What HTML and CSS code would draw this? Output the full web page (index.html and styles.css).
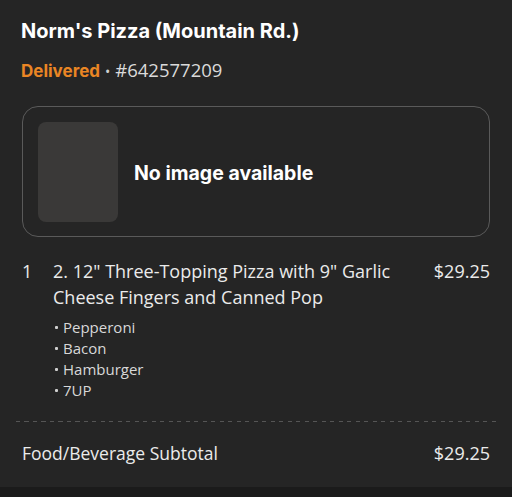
FILE: index.html
```html
<!DOCTYPE html>
<html>
<head>
<meta charset="utf-8">
<link rel="stylesheet" href="styles.css">
</head>
<body>
<div class="page">
  <header class="head">
    <h1 class="title">Norm's Pizza (Mountain Rd.)</h1>
    <div class="status"><span class="delivered">Delivered</span><span class="sep">•</span><span class="order">#642577209</span></div>
  </header>
  <div class="card">
    <div class="thumb"></div>
    <div class="noimg">No image available</div>
  </div>
  <div class="item">
    <div class="qty">1</div>
    <div class="info">
      <div class="name">2. 12" Three-Topping Pizza with 9" Garlic Cheese Fingers and Canned Pop</div>
      <ul class="opts">
        <li>Pepperoni</li>
        <li>Bacon</li>
        <li>Hamburger</li>
        <li>7UP</li>
      </ul>
    </div>
    <div class="price">$29.25</div>
  </div>
  <div class="dash"></div>
  <div class="total">
    <span>Food/Beverage Subtotal</span>
    <span class="total-price">$29.25</span>
  </div>
</div>
<div class="bottom"></div>
</body>
</html>
```

FILE: styles.css
```css
html, body {
  margin: 0;
  padding: 0;
  background: #252525;
}
body {
  font-family: "Open Sans", "Noto Sans", sans-serif;
  color: #ebebeb;
  width: 512px;
  height: 497px;
  overflow: hidden;
  display: flex;
  flex-direction: column;
}
.page {
  height: 487px;
  padding: 0 22px;
  box-sizing: border-box;
}
.head {
  padding-top: 17px;
}
.title {
  margin: 0 0 0 -1px;
  font-family: "Inter", sans-serif;
  font-weight: 700;
  font-size: 20px;
  line-height: 28px;
  color: #ffffff;
}
.status {
  margin-top: 14px;
  height: 22px;
  display: flex;
  align-items: baseline;
  line-height: 22px;
  margin-left: -1px;
}
.delivered {
  font-family: "Inter", sans-serif;
  font-weight: 700;
  font-size: 17px;
  color: #ea8624;
}
.sep {
  color: #d0d0d0;
  font-size: 14px;
  margin: 0 5px 0 5px;
}
.order {
  font-size: 18.5px;
  color: #dadada;
}
.card {
  margin-top: 25px;
  height: 131px;
  border: 1px solid #5a5a5a;
  border-radius: 16px;
  box-sizing: border-box;
  display: flex;
  align-items: center;
  padding-left: 15px;
  gap: 16px;
}
.thumb {
  width: 80px;
  height: 100px;
  border-radius: 8px;
  background: #3a3938;
}
.noimg {
  font-family: "Inter", sans-serif;
  font-weight: 700;
  font-size: 19.5px;
  color: #ffffff;
  margin-top: 2px;
}
.item {
  margin-top: 21px;
  display: flex;
  align-items: flex-start;
}
.qty {
  width: 31px;
  font-size: 18px;
  line-height: 26px;
}
.info {
  flex: 1;
}
.name {
  font-size: 18px;
  line-height: 26px;
  width: 360px;
}
.price {
  font-size: 18px;
  line-height: 26px;
  margin-left: auto;
}
.opts {
  list-style: none;
  margin: 6.5px 0 0 0;
  padding: 0;
  font-size: 15px;
  line-height: 21.3px;
  color: #d8d8d8;
}
.opts li::before {
  content: "";
  display: inline-block;
  width: 3px;
  height: 3px;
  border-radius: 1px;
  background: #d0d0d0;
  margin: 0 5px 0 2px;
  vertical-align: 4px;
}
.dash {
  margin: 19px -6px 0 -6px;
  height: 1px;
  background: repeating-linear-gradient(to right, #555 0 4px, transparent 4px 8.5px);
}
.total {
  margin-top: 18.5px;
  display: flex;
  justify-content: space-between;
  align-items: baseline;
  font-size: 17.5px;
  line-height: 26px;
}
.total-price {
  font-size: 18px;
}
.bottom {
  flex: 1;
  background: #1b1b1b;
}
```
